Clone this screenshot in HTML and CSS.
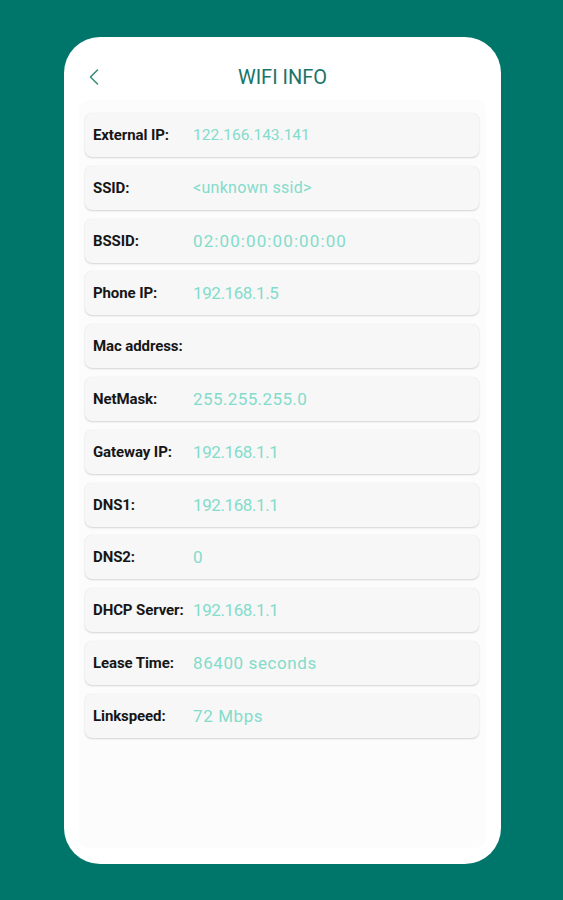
FILE: index.html
```html
<!DOCTYPE html>
<html>
<head>
<meta charset="utf-8">
<link rel="stylesheet" href="styles.css">
</head>
<body>
<div class="phone">
  <header class="header">
    <svg class="back" width="12" height="18" viewBox="0 0 12 18"><path d="M9.5 2 L2.5 9 L9.5 16" fill="none" stroke="#3f8a80" stroke-width="1.6" stroke-linecap="round" stroke-linejoin="round"/></svg>
    <h1 class="title">WIFI INFO</h1>
  </header>
  <main class="panel">
    <div class="row"><span class="label">External IP:</span><span class="value v-ext">122.166.143.141</span></div>
    <div class="row"><span class="label">SSID:</span><span class="value v-small">&lt;unknown ssid&gt;</span></div>
    <div class="row"><span class="label">BSSID:</span><span class="value v-wide">02:00:00:00:00:00</span></div>
    <div class="row"><span class="label">Phone IP:</span><span class="value v-tight">192.168.1.5</span></div>
    <div class="row"><span class="label">Mac address:</span><span class="value"></span></div>
    <div class="row"><span class="label">NetMask:</span><span class="value v-mid">255.255.255.0</span></div>
    <div class="row"><span class="label">Gateway IP:</span><span class="value v-tight">192.168.1.1</span></div>
    <div class="row"><span class="label">DNS1:</span><span class="value v-tight">192.168.1.1</span></div>
    <div class="row"><span class="label">DNS2:</span><span class="value">0</span></div>
    <div class="row"><span class="label">DHCP Server:</span><span class="value v-tight">192.168.1.1</span></div>
    <div class="row"><span class="label">Lease Time:</span><span class="value v-loose">86400 seconds</span></div>
    <div class="row"><span class="label">Linkspeed:</span><span class="value v-loose">72 Mbps</span></div>
  </main>
</div>
</body>
</html>
```
FILE: styles.css
```css
html, body {
  margin: 0;
  padding: 0;
}
body {
  background: #00756a;
  width: 563px;
  height: 900px;
  overflow: hidden;
  font-family: Roboto, "Liberation Sans", sans-serif;
}
.phone {
  margin: 37px 0 0 64px;
  width: 437px;
  height: 827px;
  background: #ffffff;
  border-radius: 36px;
  display: flex;
  flex-direction: column;
  box-sizing: border-box;
  padding: 0 15px 16px;
}
.header {
  height: 63px;
  flex: none;
  display: flex;
  align-items: center;
  justify-content: center;
  position: relative;
  box-sizing: border-box;
}
.back {
  position: absolute;
  left: 9px;
  top: 31px;
}
.title {
  margin: 0;
  font-size: 20px;
  font-weight: 400;
  color: #1b7469;
  position: relative;
  top: 8px;
}
.panel {
  flex: 1;
  background: #fcfcfc;
  border-radius: 10px;
  padding: 13px 7px 0 6px;
  display: flex;
  flex-direction: column;
  gap: 8.8px;
}
.row {
  height: 44px;
  flex: none;
  background: #f7f7f7;
  border-radius: 7px;
  box-shadow: 0 1px 2px rgba(0,0,0,0.15), 0 0 1px rgba(0,0,0,0.10);
  display: grid;
  grid-template-columns: 100px 1fr;
  align-items: center;
  padding: 0 8px;
}
.label {
  font-size: 15px;
  font-weight: 700;
  color: #161616;
  white-space: nowrap;
  letter-spacing: -0.1px;
}
.value {
  font-size: 17px;
  color: #83dccb;
  white-space: nowrap;
}
.v-ext {
  font-size: 15.5px;
}
.v-small {
  font-size: 16px;
  letter-spacing: 0.3px;
}
.v-wide {
  letter-spacing: 1.1px;
}
.v-mid {
  letter-spacing: 0.4px;
}
.v-tight {
  letter-spacing: -0.4px;
}
.v-loose {
  letter-spacing: 0.6px;
}
```
